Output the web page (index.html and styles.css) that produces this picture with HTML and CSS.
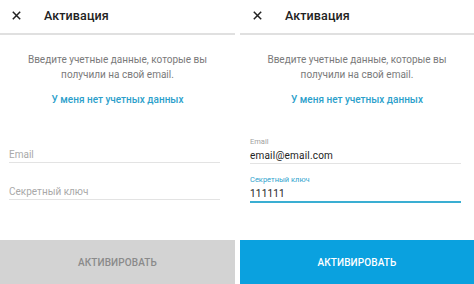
FILE: index.html
```html
<!DOCTYPE html>
<html lang="ru">
<head>
<meta charset="utf-8">
<link rel="stylesheet" href="styles.css">
</head>
<body>
<div class="screens">
  <section class="panel left">
    <header class="bar">
      <svg class="close" width="9" height="9" viewBox="0 0 9 9"><path d="M0.8 0.8L8.2 8.2M8.2 0.8L0.8 8.2" stroke="#222" stroke-width="1.5"/></svg>
      <span class="title">Активация</span>
    </header>
    <p class="desc">Введите учетные данные, которые вы<br>получили на свой email.</p>
    <a class="link">У меня нет учетных данных</a>
    <div class="fields">
      <div class="field empty"><span class="ph">Email</span></div>
      <div class="field empty"><span class="ph">Секретный ключ</span></div>
    </div>
    <button class="btn disabled">АКТИВИРОВАТЬ</button>
  </section>
  <section class="panel right">
    <header class="bar">
      <svg class="close" width="9" height="9" viewBox="0 0 9 9"><path d="M0.8 0.8L8.2 8.2M8.2 0.8L0.8 8.2" stroke="#222" stroke-width="1.5"/></svg>
      <span class="title">Активация</span>
    </header>
    <p class="desc">Введите учетные данные, которые вы<br>получили на свой email.</p>
    <a class="link">У меня нет учетных данных</a>
    <div class="fields">
      <div class="field filled"><span class="lbl">Email</span><span class="val">email@email.com</span></div>
      <div class="field filled focus"><span class="lbl">Секретный ключ</span><span class="val">111111</span></div>
    </div>
    <button class="btn active">АКТИВИРОВАТЬ</button>
  </section>
</div>
</body>
</html>
```

FILE: styles.css
```css
* { box-sizing: border-box; }
html, body { margin: 0; padding: 0; background: #fff; }
body { font-family: Roboto, "Noto Sans", sans-serif; width: 474px; height: 284px; overflow: hidden; }
.screens { display: flex; gap: 5px; height: 284px; }
.panel { display: flex; flex-direction: column; height: 284px; }
.panel.left { width: 235px; }
.panel.right { width: 234px; }
.bar { height: 35px; border-bottom: 2px solid #e0e0e0; display: flex; align-items: center; padding-left: 12px; padding-bottom: 2px; }
.panel.right .bar { padding-left: 13px; }
.close { flex: none; }
.title { margin-left: 23px; font-size: 12.5px; font-weight: 500; color: #222; letter-spacing: 0.1px; }
.desc { margin: 18px 0 0; text-align: center; font-size: 10px; line-height: 14.5px; color: #7a7a7a; }
.link { display: block; margin-top: 11px; text-align: center; font-size: 10px; font-weight: 500; color: #2c9fcb; line-height: 14px; }
.fields { flex: 1; display: flex; flex-direction: column; padding: 0 15px 0 9px; }
.panel.right .fields { padding: 0 13px 0 10px; }
.field { display: flex; flex-direction: column; border-bottom: 1px solid #e3e3e3; }
.field.empty { height: 24px; justify-content: flex-end; }
.left .field.empty:first-child { margin-top: 32px; }
.left .field.empty + .field.empty { margin-top: 13px; }
.ph { font-size: 10px; color: #a9a9a9; line-height: 14px; }
.right .field.filled:first-child { margin-top: 30px; }
.right .field.filled + .field.filled { margin-top: 11px; }
.lbl { font-size: 7.5px; color: #a0a0a0; line-height: 10px; }
.val { font-size: 10px; color: #222; line-height: 14px; margin-top: 2px; letter-spacing: 0.2px; }
.field.focus { border-bottom: 2px solid #3aaed2; }
.field.focus .lbl { color: #2ea3cd; }
.btn { height: 44px; border: 0; margin: 0; width: 100%; font-family: inherit; font-size: 10px; font-weight: 500; letter-spacing: 0.1px; padding: 0; }
.btn.disabled { background: #d3d3d3; color: #8a8a8a; }
.btn.active { background: #0aa1df; color: #fff; }
```
